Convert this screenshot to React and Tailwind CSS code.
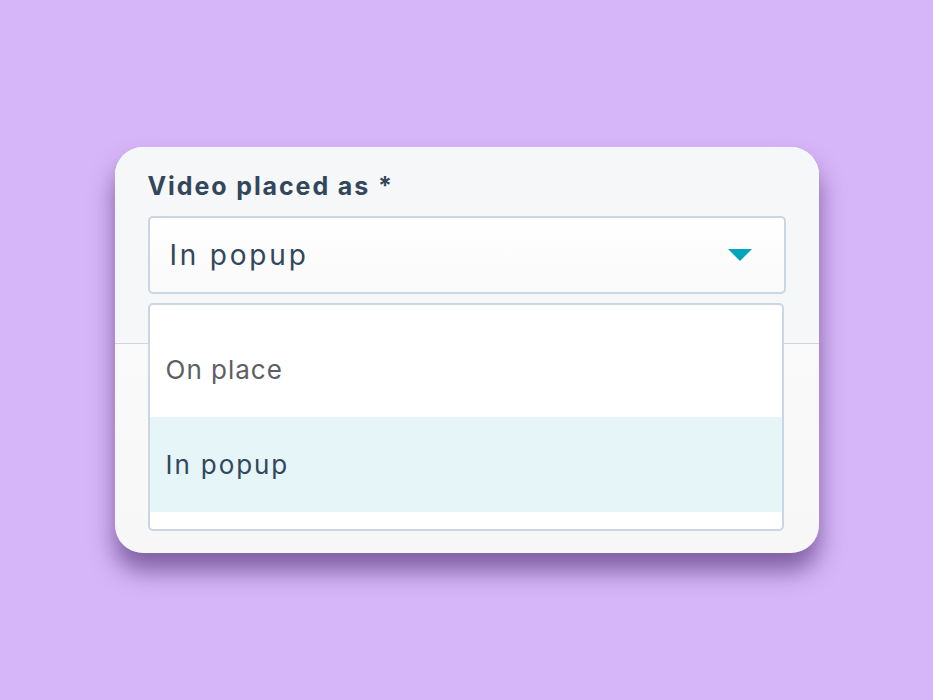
import React from 'react';

const App = () => {
    return (
        <div
            className="w-[933px] h-[700px] bg-[#d6b6f8] flex items-start justify-center pt-[147px]"
            style={{ fontFamily: 'Inter, "Noto Sans", sans-serif' }}
        >
            <div className="relative w-[704px] h-[406px] rounded-[28px] overflow-hidden bg-gradient-to-b from-[#fcfcfc] to-[#f7f7f7] shadow-[0_18px_24px_rgba(70,35,105,0.6)]">
                {/* Top panel */}
                <div className="h-[197px] bg-[#f5f7f9] border-b border-[#cbd6e2] px-[33px] pt-[22px]">
                    <label className="block text-[25px] font-bold text-[#33475b] leading-[34px] tracking-[1.9px]">
                        Video placed as *
                    </label>
                    <div className="mt-[13px] h-[78px] bg-gradient-to-b from-white to-[#fafafa] border-2 border-[#cbd6e2] rounded-[5px] flex items-center justify-between pl-[20px] pr-[32px]">
                        <span className="text-[28px] text-[#33475b] tracking-[2.8px]">In popup</span>
                        <svg width="24" height="12" viewBox="0 0 24 12">
                            <path d="M0 0 H24 L12 12 Z" fill="#00a4bd" />
                        </svg>
                    </div>
                </div>

                {/* Dropdown menu */}
                <div className="absolute left-[33px] top-[156px] w-[636px] h-[228px] bg-white border-2 border-[#cbd6e2] rounded-[5px] pt-[17px] overflow-hidden">
                    <div className="h-[95px] flex items-center pl-[16px] text-[26px] text-[#5c6065] tracking-[1px]">
                        On place
                    </div>
                    <div className="h-[95px] flex items-center pl-[16px] text-[26px] text-[#33475b] bg-[#e5f5f8] tracking-[1.9px]">
                        In popup
                    </div>
                </div>
            </div>
        </div>
    );
};

export default App;
